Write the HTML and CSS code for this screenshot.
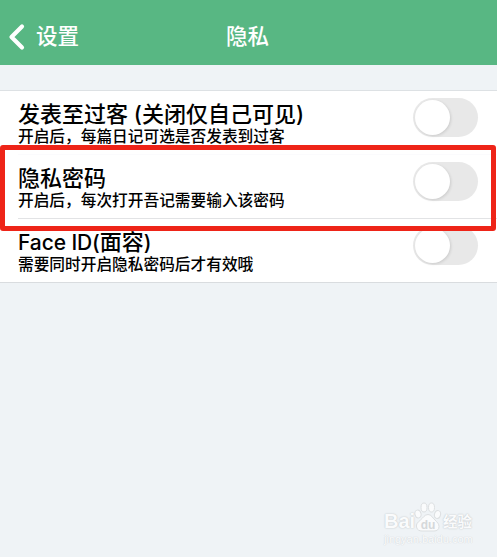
FILE: index.html
```html
<!DOCTYPE html>
<html lang="zh-CN">
<head>
  <meta charset="UTF-8">
  <title>隐私</title>
  <link rel="stylesheet" href="styles.css">
</head>
<body>
  <div class="page">
    <header class="navbar">
      <a class="back">
        <svg width="17" height="28" viewBox="0 0 17 28"><path d="M14 3.500 L3.500 14 L14 24.500" fill="none" stroke="#fff" stroke-width="4.200" stroke-linecap="round" stroke-linejoin="round"/></svg>
        <span>设置</span>
      </a>
      <h1>隐私</h1>
    </header>

    <main class="list">
      <div class="row first">
        <div class="text">
          <div class="title">发表至过客 (关闭仅自己可见)</div>
          <div class="desc">开启后，每篇日记可选是否发表到过客</div>
        </div>
        <div class="switch"></div>
      </div>
      <div class="row">
        <div class="text">
          <div class="title">隐私密码</div>
          <div class="desc">开启后，每次打开吾记需要输入该密码</div>
        </div>
        <div class="switch"></div>
      </div>
      <div class="row">
        <div class="text">
          <div class="title"><span class="latin">Face ID(</span>面容<span class="latin">)</span></div>
          <div class="desc">需要同时开启隐私密码后才有效哦</div>
        </div>
        <div class="switch"></div>
      </div>
    </main>

    <div class="highlight"></div>

    <div class="watermark">
      <div class="brand">
        <span class="bai">Bai</span>
        <svg class="paw" width="28" height="30" viewBox="0 0 28 30">
          <g fill="#fafbfc" stroke="#dcdfe1" stroke-width="1">
            <ellipse cx="4" cy="12" rx="3" ry="4" transform="rotate(-15 4 12)"/>
            <ellipse cx="10" cy="5.500" rx="3" ry="4.500"/>
            <ellipse cx="17.500" cy="5.500" rx="3" ry="4.500"/>
            <ellipse cx="23.500" cy="12.500" rx="3" ry="4" transform="rotate(15 23.500 12.500)"/>
            <path d="M14 12.500c-3.500 0-5 3.500-7.500 5.500-3 2.500-4.500 4-4 7 .5 3 3 4 5.500 4h12c3 0 5-1.500 5-4.500 0-2.500-1.500-4-4-6.500-2.500-2-3.500-5.500-7-5.500z"/>
          </g>
          <text x="14" y="27" text-anchor="middle">du</text>
        </svg>
        <span class="exp">经验</span>
      </div>
      <div class="url">jingyan.baidu.com</div>
    </div>
  </div>
</body>
</html>
```

FILE: styles.css
```css
* {
  box-sizing: border-box;
}

body {
  margin: 0;
  background: #fff;
  font-family: Inter, "Noto Sans CJK SC", sans-serif;
}

.page {
  position: relative;
  width: 497px;
  height: 557px;
  background: #eff3f6;
  overflow: hidden;
}

.navbar {
  display: grid;
  grid-template-columns: 1fr auto 1fr;
  align-items: center;
  height: 65px;
  padding: 8px 10px 0 8px;
  background: #58b783;
  color: #fff;
}

.back {
  display: flex;
  align-items: center;
  gap: 11px;
  font-size: 21.500px;
}

.back span,
.navbar h1 {
  font-weight: 500;
  line-height: 24px;
  padding-bottom: 1px;
}

.navbar h1 {
  margin: 0;
  font-size: 21.500px;
}

.list {
  margin-top: 25px;
  border-top: 1px solid #dde1e4;
  border-bottom: 1px solid #d9dcdf;
  background: #fff;
}

.row {
  display: flex;
  justify-content: space-between;
  height: 64px;
  margin-left: 18px;
  padding: 7px 19px 0 0;
  border-bottom: 1px solid #e2e3e5;
}

.first {
  border-bottom-color: #fbfbfd;
}

.row:last-child {
  height: 63px;
  border-bottom: none;
}

.title {
  height: 31px;
  font-size: 22px;
  font-weight: 500;
  line-height: 32px;
  white-space: nowrap;
}

.latin {
  font-size: 21px;
  letter-spacing: -0.1px;
}

.desc {
  font-size: 15.700px;
  font-weight: 500;
  line-height: 16px;
  white-space: nowrap;
}

.switch {
  width: 65px;
  height: 39px;
  border-radius: 20px;
  background: #e8e8e8;
}

.switch::before {
  content: "";
  display: block;
  width: 35px;
  height: 35px;
  margin: 2px;
  border-radius: 50%;
  background: #fff;
  box-shadow: 1px 1px 3px rgba(0, 0, 0, 0.12);
}

.highlight {
  position: absolute;
  left: 0;
  top: 145px;
  width: 496px;
  height: 86px;
  border: 5px solid #ee2418;
  border-radius: 3px;
}

.watermark {
  position: absolute;
  left: 384px;
  top: 502px;
  width: 90px;
  color: #fafbfc;
}

.brand {
  display: flex;
  align-items: flex-end;
  height: 30px;
  text-shadow: 0 0 1px #c9cdd0, 0 0 2px #c9cdd0;
}

.bai {
  width: 30px;
  font: bold 20px/22px "Liberation Sans", sans-serif;
}

.paw text {
  font: bold 12px "Liberation Sans", sans-serif;
  fill: #d5d8da;
  text-shadow: none;
}

.exp {
  margin-left: 1px;
  font-size: 14.500px;
  font-weight: 700;
  line-height: 20px;
}

.url {
  font: 11px/14px "Liberation Sans", sans-serif;
  text-shadow: 0 0 1px #d3d7da, 0 0 1px #d3d7da;
  white-space: nowrap;
}
```
